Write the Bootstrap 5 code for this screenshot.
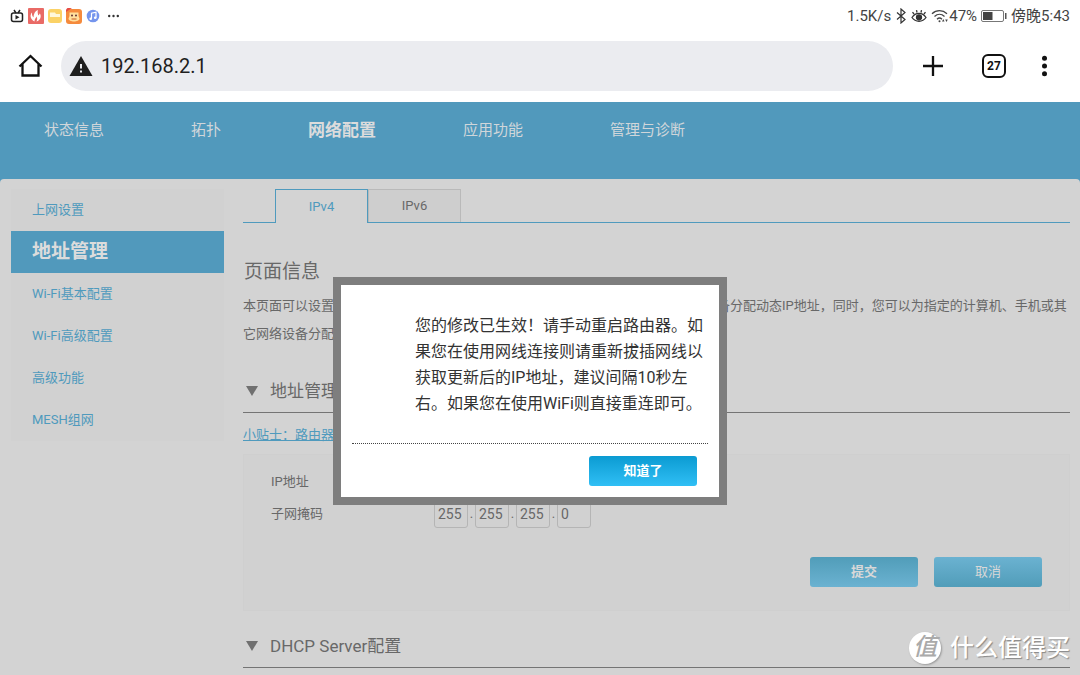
<!DOCTYPE html>
<html lang="zh-CN">
<head>
<meta charset="utf-8">
<meta name="viewport" content="width=device-width, initial-scale=1">
<title>192.168.2.1</title>
<link href="https://cdn.jsdelivr.net/npm/bootstrap@5.3.0/dist/css/bootstrap.min.css" rel="stylesheet">
<style>
  :root { --blue: #5199bc; --paper: #d3d3d3; --ink: #686868; --link: #4f9abd; }
  body { font-family: Roboto, "Noto Sans CJK SC", sans-serif; font-size: 13px; line-height: 20px; color: var(--ink); background: #fff; }
  svg { display: block; flex: none; }
  .status-bar { height: 31px; padding: 0 10px; font-size: 15px; color: #444; }
  .url-bar { height: 71px; padding: 0 24px 1px 18px; }
  .omnibox { height: 50px; margin-left: 18px; margin-right: 29px; padding: 0 8px; background: #ebecf0; border-radius: 25px; }
  .omnibox input { font-size: 20px; color: #1f1f1f; outline: 0; min-width: 0; }
  .icon-btn { color: #111; }
  .tab-count { width: 24px; height: 24px; margin: 0 27px 0 38px; border: 2px solid #111; border-radius: 6px; font-size: 12px; line-height: 20px; font-weight: 700; color: #111; }
  .router { background: var(--blue); }
  .top-nav { height: 77px; padding: 17px 44px 0; gap: 87px; }
  .top-nav a { font-size: 15px; line-height: 22px; color: #d0d6da; text-decoration: none; }
  .top-nav a.active { font-size: 17px; font-weight: 700; color: #dcdcdc; }
  .sheet { background: var(--paper); border-radius: 4px 4px 0 0; padding: 10px 10px 7px 11px; gap: 19px; }
  .side-nav { width: 213px; flex: none; background: #d1d1d1; }
  .side-nav a { line-height: 42px; padding: 0 21px; color: var(--link); text-decoration: none; }
  .side-nav a.active { font-size: 19px; font-weight: 700; background: var(--blue); color: #dcdcdc; }
  .ip-tabs { padding-left: 32px; border-bottom: 1px solid var(--link); }
  .ip-tabs button { width: 93px; height: 33px; border: 1px solid #b9b9b9; border-bottom: 0; background: #cecece; color: var(--ink); padding: 0; }
  .ip-tabs button.active { height: 34px; border-color: var(--link); background: var(--paper); color: var(--link); margin-bottom: -1px; }
  .page-title { font-size: 19px; line-height: 28px; margin: 35px 0 6px; padding-left: 1px; }
  .intro { line-height: 28px; margin-bottom: 30px; }
  .group-title { font-size: 17px; line-height: 26px; padding: 0 3px 8px; gap: 12px; border-bottom: 1px solid #747474; margin: 0; font-weight: 400; }
  .tip { color: var(--link); margin: 12px 0 9px; }
  .panel { background: #d1d1d1; border: 1px solid #cfcfcf; padding: 11px 27px 23px; margin-bottom: 22px; }
  .field { height: 32px; }
  .field-name { width: 163px; }
  .octet { width: 34px; height: 27px; border: 1px solid #b5b5b5; border-radius: 3px; background: #d1d1d1; color: var(--ink); font-size: 14px; padding: 0 3px; }
  .dot { width: 7px; text-align: center; }
  .actions { margin-top: 27px; gap: 16px; }
  .key { width: 108px; height: 30px; border: 0; border-radius: 3px; padding: 0; font-size: 13px; color: #d8d8d8; }
  .key-down { background: linear-gradient(#519db9, #6bb2d1); }
  .key-up { background: linear-gradient(#6bb2d1, #519db9); }
  .key-main { background: linear-gradient(#0b9bd2, #30bff5); color: #fff; }
  .overlay { inset: 0; padding: 175px 20px 0 0; }
  .notice { width: 394px; border: 8px solid #7e7e7e; background: #fff; color: #333; padding: 28px 11px 11px; }
  .notice p { font-size: 16px; line-height: 26px; margin: 0; padding: 0 0 26px 63px; margin-right: -2px; }
  .notice-foot { border-top: 1px dotted #444; padding: 12px 11px 0 0; }
  .stamp { right: 10px; bottom: 9px; gap: 9px; color: #fff; font-size: 24px; line-height: 36px; font-weight: 500; text-shadow: 1px 1px 1px #888; }
  .stamp-disc { width: 32px; height: 32px; line-height: 30px; border-radius: 50%; background: #fff; color: #aaa; text-shadow: none; box-shadow: 1px 1px 2px #999; font-style: italic; }
</style>
</head>
<body class="d-flex flex-column min-vh-100">

<header>
  <div class="status-bar d-flex align-items-center justify-content-between">
    <div class="d-flex align-items-center">
      <svg width="14" height="14" viewBox="0 0 14 14" fill="none" stroke="#222" stroke-width="1.5"><rect x="1.5" y="4" width="11" height="8.5" rx="2"/><path d="M4 1l2 3M10 1L8 4"/><path d="M5.500 6v4.500L9.500 8.200z" fill="#222" stroke="none"/></svg>
      <svg class="ms-1" width="16" height="16" viewBox="0 0 16 16"><rect width="16" height="16" rx="1" fill="#e96a66"/><path d="M6.500 13.500C1.500 11 2 6.500 4 4.500c-.3 3 .8 4 1.500 4.800C5.600 6 7 3 10 2c-1 2.500.4 3.500 0 5.500 1-.4 1.600-1.200 1.800-2.200 2 3.500.5 7.200-3.300 8.200 1-2 .8-3.500 0-5-.8 1.800-2 2.500-2 5z" fill="#fff"/></svg>
      <svg class="ms-1" width="14" height="14" viewBox="0 0 14 14"><rect width="14" height="14" rx="3" fill="#fbd266"/><path d="M2 3.500h5l1 1.500h4v3H2z" fill="#fff8dc"/></svg>
      <svg class="ms-1" width="16" height="16" viewBox="0 0 16 16"><rect y="1" width="16" height="15" rx="3" fill="#f58a3c"/><path d="M3.500 4.500h9V8l1 2.500c0 4-11 4-11 0L3.500 8z" fill="#ffdf9e"/><circle cx="6" cy="7.500" r="1" fill="#633"/><circle cx="10" cy="7.500" r="1" fill="#633"/><path d="M5.500 11h5" stroke="#c65d24"/><path d="M0 4V1.500L1.500 0H6z" fill="#e64b45"/></svg>
      <svg class="ms-1" width="14" height="14" viewBox="0 0 14 14"><circle cx="7" cy="7" r="6.300" fill="#7595ed"/><path d="M5.500 9.500V4.200l4.500-1v5.500" fill="none" stroke="#fff" stroke-width="1.200"/><circle cx="4.700" cy="9.700" r="1.300" fill="#fff"/><circle cx="9.200" cy="8.800" r="1.300" fill="#fff"/></svg>
      <svg class="ms-2" width="12" height="4" viewBox="0 0 12 4" fill="#333"><circle cx="1.200" cy="2" r="1.200"/><circle cx="5.500" cy="2" r="1.200"/><circle cx="9.800" cy="2" r="1.200"/></svg>
    </div>
    <div class="d-flex align-items-center">
      <span>1.5K/s</span>
      <svg class="ms-1" width="12" height="16" viewBox="0 0 12 16" fill="none" stroke="#333" stroke-width="1.200"><path d="M2 4.500l8 7L6 15V1l4 3.500-8 7"/></svg>
      <svg class="ms-1" width="16" height="14" viewBox="0 0 16 14" fill="none" stroke="#333" stroke-width="1.300"><path d="M1 8.500c3.500-5.500 10.500-5.500 14 0-3.500 5-10.500 5-14 0zM3 5L1.500 3.200M6 3.500L5.500 1.200M10 3.500l.5-2.300M13 5l1.500-1.800"/><circle cx="8" cy="8.300" r="2.500" fill="#333"/></svg>
      <svg class="ms-1" width="18" height="14" viewBox="0 0 18 14" fill="none" stroke="#444" stroke-width="1.300"><path d="M1 4.700c4.300-4 10.700-4 15 0M3.500 7.500c3-2.800 7-2.800 10 0M6 10.200c1.500-1.400 3.500-1.400 5 0"/><circle cx="8.500" cy="12.300" r="1" fill="#444" stroke="none"/><path d="M11 12.500l1.300-2.500 1.200 2.500zM14.200 10.500h2.600l-1.300 2.500z" fill="#444" stroke="none"/></svg>
      <span>47%</span>
      <svg class="ms-1 me-1" width="26" height="12" viewBox="0 0 26 12"><rect x=".5" y=".5" width="22" height="11" rx="1.500" fill="none" stroke="#777"/><rect x="2" y="2" width="9.500" height="8" fill="#444"/><path d="M24 3h1.500v6H24z" fill="#555"/></svg>
      <span>傍晚5:43</span>
    </div>
  </div>

  <div class="url-bar d-flex align-items-center">
    <button class="icon-btn btn p-0 border-0" aria-label="主页"><svg width="25" height="24" viewBox="0 0 25 24" fill="none" stroke="currentColor" stroke-width="2.300" stroke-linejoin="miter"><path d="M1.500 12.500L12.500 2l11 10.500M4.500 10v11.500h16V10"/></svg></button>
    <div class="omnibox d-flex align-items-center flex-grow-1">
      <svg width="24" height="20" viewBox="0 0 24 20"><path d="M12 0l11.500 20H.5z" fill="#1f1f1f"/><path d="M11 8h2v4.500h-2zM11 14.500h2v2h-2z" fill="#ebecf0"/></svg>
      <input class="border-0 bg-transparent flex-grow-1 p-0 ms-2" type="text" value="192.168.2.1" aria-label="网址">
    </div>
    <button class="icon-btn btn p-0 border-0" aria-label="新标签页"><svg width="22" height="22" viewBox="0 0 22 22" stroke="currentColor" stroke-width="2.300"><path d="M11 1v20M1 11h20"/></svg></button>
    <button class="tab-count bg-transparent p-0 text-center" aria-label="标签页">27</button>
    <button class="icon-btn btn border-0 px-2 py-0" aria-label="菜单"><svg width="7" height="22" viewBox="0 0 7 22" fill="currentColor"><circle cx="3.500" cy="3.300" r="2.500"/><circle cx="3.500" cy="11" r="2.500"/><circle cx="3.500" cy="18.700" r="2.500"/></svg></button>
  </div>
</header>

<div class="router position-relative d-flex flex-column flex-grow-1">
  <nav class="top-nav d-flex align-items-start">
    <a href="#">状态信息</a>
    <a href="#">拓扑</a>
    <a class="active" href="#">网络配置</a>
    <a href="#">应用功能</a>
    <a href="#">管理与诊断</a>
  </nav>

  <div class="sheet d-flex align-items-start flex-grow-1">
    <nav class="side-nav d-flex flex-column">
      <a href="#">上网设置</a>
      <a class="active" href="#">地址管理</a>
      <a href="#">Wi-Fi基本配置</a>
      <a href="#">Wi-Fi高级配置</a>
      <a href="#">高级功能</a>
      <a href="#">MESH组网</a>
    </nav>

    <main class="flex-grow-1">
      <div class="ip-tabs d-flex">
        <button class="active" type="button">IPv4</button>
        <button type="button">IPv6</button>
      </div>
      <h1 class="page-title fw-normal">页面信息</h1>
      <p class="intro">本页面可以设置路由器的LAN口IP地址和子网掩码，并启用DHCP服务为局域网内设备分配动态IP地址，同时，您可以为指定的计算机、手机或其它网络设备分配地址。</p>

      <h2 class="group-title d-flex align-items-center"><svg width="12" height="10" viewBox="0 0 12 10"><path d="M0 0h12L6 10z" fill="#707070"/></svg>地址管理</h2>
      <p class="tip"><a class="text-reset" href="#">小贴士：路由器地址修改后需要重新连接</a></p>
      <form class="panel">
        <div class="field d-flex align-items-center">
          <label class="field-name" for="ip1">IP地址</label>
          <input class="octet" id="ip1" value="192"><span class="dot">.</span>
          <input class="octet" aria-label="IP地址 2" value="168"><span class="dot">.</span>
          <input class="octet" aria-label="IP地址 3" value="2"><span class="dot">.</span>
          <input class="octet" aria-label="IP地址 4" value="1">
        </div>
        <div class="field d-flex align-items-center">
          <label class="field-name" for="mask1">子网掩码</label>
          <input class="octet" id="mask1" value="255"><span class="dot">.</span>
          <input class="octet" aria-label="子网掩码 2" value="255"><span class="dot">.</span>
          <input class="octet" aria-label="子网掩码 3" value="255"><span class="dot">.</span>
          <input class="octet" aria-label="子网掩码 4" value="0">
        </div>
        <div class="actions d-flex justify-content-end">
          <button class="key key-down fw-bold" type="button">提交</button>
          <button class="key key-up" type="button">取消</button>
        </div>
      </form>
      <h2 class="group-title d-flex align-items-center"><svg width="12" height="10" viewBox="0 0 12 10"><path d="M0 0h12L6 10z" fill="#707070"/></svg>DHCP Server配置</h2>
    </main>
  </div>

  <div class="overlay position-absolute d-flex justify-content-center align-items-start">
    <div class="notice" role="dialog" aria-modal="true" aria-label="提示">
      <p>您的修改已生效！请手动重启路由器。如果您在使用网线连接则请重新拔插网线以获取更新后的IP地址，建议间隔10秒左右。如果您在使用WiFi则直接重连即可。</p>
      <div class="notice-foot d-flex justify-content-end">
        <button class="key key-main fw-bold" type="button">知道了</button>
      </div>
    </div>
  </div>

  <div class="stamp position-absolute d-flex align-items-center">
    <span class="stamp-disc text-center">值</span>
    <span>什么值得买</span>
  </div>
</div>

<script src="https://cdn.jsdelivr.net/npm/bootstrap@5.3.0/dist/js/bootstrap.bundle.min.js"></script>
</body>
</html>
